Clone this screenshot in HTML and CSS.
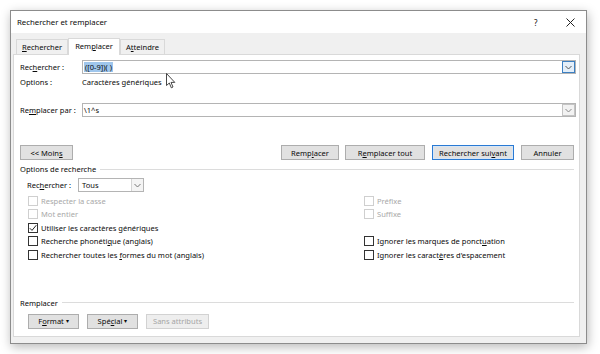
FILE: index.html
```html
<!DOCTYPE html>
<html lang="fr">
<head>
    <meta charset="UTF-8">
    <title>Rechercher et remplacer</title>
    <link rel="stylesheet" href="styles.css">
</head>
<body>
    <div class="dialog">
        <div class="titlebar">
            <span class="title">Rechercher et remplacer</span>
            <span class="help">?</span>
            <span class="close">
                <svg width="9" height="9" viewBox="0 0 9 9"><path d="M0.5 0.5L8.5 8.5M8.5 0.5L0.5 8.5" stroke="#222" stroke-width="1"/></svg>
            </span>
        </div>

        <div class="tabs">
            <div class="tab"><u>R</u>echercher</div>
            <div class="tab active">Rem<u>p</u>lacer</div>
            <div class="tab">A<u>t</u>teindre</div>
        </div>

        <div class="panel">
            <div class="field-row first">
                <span class="field-label">Rec<u>h</u>ercher :</span>
                <div class="combo">
                    <span class="combo-text"><span class="selected">([0-9])( )</span></span>
                    <span class="combo-btn focus">
                        <svg width="7" height="5" viewBox="0 0 7 5"><path d="M0.5 1L3.5 4L6.5 1" fill="none" stroke="#555" stroke-width="1"/></svg>
                    </span>
                </div>
            </div>

            <div class="options-row">
                <span class="field-label">Options :</span>
                <span>Caractères génériques</span>
                <svg class="pointer" width="10" height="16" viewBox="0 0 10 16"><path d="M0.5 0.5V12.5L3.3 10L5.3 14.8L7 14L5 9.4H8.8Z" fill="#fff" stroke="#333" stroke-width="0.9" stroke-linejoin="round"/></svg>
            </div>

            <div class="field-row replace">
                <span class="field-label">Re<u>m</u>placer par :</span>
                <div class="combo">
                    <span class="combo-text">\1^s</span>
                    <span class="combo-btn">
                        <svg width="7" height="5" viewBox="0 0 7 5"><path d="M0.5 1L3.5 4L6.5 1" fill="none" stroke="#888" stroke-width="1"/></svg>
                    </span>
                </div>
            </div>

            <div class="button-row">
                <button class="btn btn-less">&lt;&lt; Moin<u>s</u></button>
                <div class="spacer"></div>
                <button class="btn btn-replace">Remp<u>l</u>acer</button>
                <button class="btn btn-all">R<u>e</u>mplacer tout</button>
                <button class="btn btn-next default">Rechercher sui<u>v</u>ant</button>
                <button class="btn btn-cancel">Annuler</button>
            </div>

            <div class="group-title search-options"><span>Options de recherche</span></div>

            <div class="search-in">
                <span class="search-in-label">Rec<u>h</u>ercher :</span>
                <div class="select">
                    <span class="select-text">Tous</span>
                    <span class="select-btn">
                        <svg width="7" height="5" viewBox="0 0 7 5"><path d="M0.5 1L3.5 4L6.5 1" fill="none" stroke="#777" stroke-width="1"/></svg>
                    </span>
                </div>
            </div>

            <div class="checks">
                <label class="check disabled"><span class="box"></span><span>Respecter la casse</span></label>
                <label class="check disabled"><span class="box"></span><span>Préfixe</span></label>
                <label class="check disabled"><span class="box"></span><span>Mot entier</span></label>
                <label class="check disabled"><span class="box"></span><span>Suffixe</span></label>
                <label class="check"><span class="box">
                    <svg width="8" height="8" viewBox="0 0 8 8"><path d="M0.8 4.2L3 6.4L7.3 1.2" fill="none" stroke="#222" stroke-width="1"/></svg>
                </span><span>Utiliser les caractères <u>g</u>énériques</span></label>
                <span></span>
                <label class="check"><span class="box"></span><span>Recherche phonéti<u>q</u>ue (anglais)</span></label>
                <label class="check"><span class="box"></span><span>Ignorer les marques de ponct<u>u</u>ation</span></label>
                <label class="check"><span class="box"></span><span>Rechercher toutes les <u>f</u>ormes du mot (anglais)</span></label>
                <label class="check"><span class="box"></span><span>Ignorer les caract<u>è</u>res d'espacement</span></label>
            </div>

            <div class="group-title replace-group"><span>Remplacer</span></div>

            <div class="format-row">
                <button class="btn btn-small">F<u>o</u>rmat <span class="caret">▾</span></button>
                <button class="btn btn-small">Spé<u>c</u>ial <span class="caret">▾</span></button>
                <button class="btn btn-plain" disabled>Sans attributs</button>
            </div>
        </div>
    </div>
</body>
</html>
```

FILE: styles.css
```css
* { margin: 0; padding: 0; box-sizing: border-box; }
body {
    font-family: 'Noto Sans', 'Liberation Sans', sans-serif;
    font-size: 7.55px;
    color: #0a0a0a;
    background: #fff;
    width: 600px;
    height: 354px;
    overflow: hidden;
}
u { text-decoration-thickness: 1px; text-underline-offset: 1px; }

.dialog {
    margin: 10px 0 0 10px;
    width: 577px;
    height: 334px;
    border: 1px solid #8c8c8c;
    background: #f0f0f0;
    box-shadow: 1px 3px 10px rgba(0, 0, 0, 0.28);
    display: flex;
    flex-direction: column;
}

.titlebar {
    height: 22px;
    background: #fff;
    display: flex;
    align-items: center;
    padding-left: 6px;
    font-size: 7.8px;
}
.title { flex: 1; }
.help { width: 32px; font-size: 8px; }
.close { width: 20px; display: flex; align-items: center; }

.tabs {
    display: flex;
    align-items: flex-end;
    height: 21px;
    padding-left: 5px;
}
.tab {
    height: 15px;
    padding: 0 5px;
    line-height: 14px;
    border: 1px solid #d9d9d9;
    border-bottom: none;
    background: #f0f0f0;
}
.tab.active {
    height: 17px;
    line-height: 15px;
    padding: 0 6px;
    background: #fff;
    margin-bottom: -1px;
    position: relative;
    z-index: 1;
}

.panel {
    margin: 0 6px 6px 2px;
    flex: 1;
    background: #fff;
    border: 1px solid #d9d9d9;
    padding: 0 3px 0 6px;
}

.field-row {
    display: flex;
    align-items: center;
    height: 14px;
}
.field-row.first { margin-top: 5px; }
.field-row.replace { margin-top: 15px; }
.field-label { width: 62px; flex: none; }

.combo {
    flex: 1;
    height: 14px;
    border: 1px solid #b4b4b4;
    display: flex;
    align-items: center;
    padding-left: 1px;
    background: #fff;
}
.combo-text { flex: 1; }
.selected { background: #9fc6ec; padding: 0 1px; }
.combo-btn {
    width: 13px;
    height: 12px;
    border: 1px solid #c4c4c4;
    background: #f2f2f2;
    display: flex;
    align-items: center;
    justify-content: center;
}
.combo-btn.focus {
    border-color: #3c7fc1;
    background: #e3eef9;
}

.options-row {
    display: flex;
    align-items: center;
    height: 12px;
    margin-top: 2px;
    position: relative;
}
.pointer {
    position: absolute;
    left: 146px;
    top: -3px;
}

.button-row {
    display: flex;
    margin-top: 28px;
    height: 15px;
    padding-right: 2px;
    gap: 7px;
}
.spacer { flex: 1; }
.btn {
    font: inherit;
    color: inherit;
    height: 15px;
    border: 1px solid #adadad;
    background: #e1e1e1;
}
.btn-less { width: 53px; }
.btn-replace { width: 58px; }
.btn-all { width: 80px; margin-left: -1px; }
.btn-next { width: 82px; }
.btn-cancel { width: 53px; }
.btn.default { border: 1px solid #2a7ad3; box-shadow: inset 0 0 0 1px #d7e6f6; }

.group-title {
    display: flex;
    align-items: center;
    gap: 4px;
    height: 12px;
    padding-right: 2px;
}
.group-title::after {
    content: '';
    flex: 1;
    border-top: 1px solid #dcdcdc;
}
.search-options { margin-top: 3px; }
.replace-group { margin-top: 35px; }

.search-in {
    display: flex;
    align-items: center;
    margin: 3px 0 0 7px;
    height: 14px;
}
.search-in-label { width: 51px; }
.select {
    width: 66px;
    height: 14px;
    border: 1px solid #b4b4b4;
    display: flex;
    align-items: center;
    padding-left: 3px;
}
.select-text { flex: 1; }
.select-btn {
    width: 12px;
    height: 12px;
    border-left: 1px solid #d4d4d4;
    background: #f4f4f4;
    display: flex;
    align-items: center;
    justify-content: center;
}

.checks {
    display: grid;
    grid-template-columns: 336px 1fr;
    grid-auto-rows: 13.5px;
    margin: 2px 0 0 8px;
}
.check {
    display: flex;
    align-items: center;
    gap: 3px;
}
.box {
    width: 10px;
    height: 10px;
    border: 1px solid #333;
    display: flex;
    align-items: center;
    justify-content: center;
}
.check.disabled { color: #a8a8a8; }
.check.disabled .box { border-color: #cfcfcf; }

.format-row {
    display: flex;
    gap: 8px;
    margin: 5px 0 0 8px;
}
.btn-small { width: 51px; }
.btn-plain { width: 63px; color: #a5a5a5; background: #eeeeee; border-color: #d2d2d2; }
.caret { font-size: 6px; vertical-align: 1px; }
```
